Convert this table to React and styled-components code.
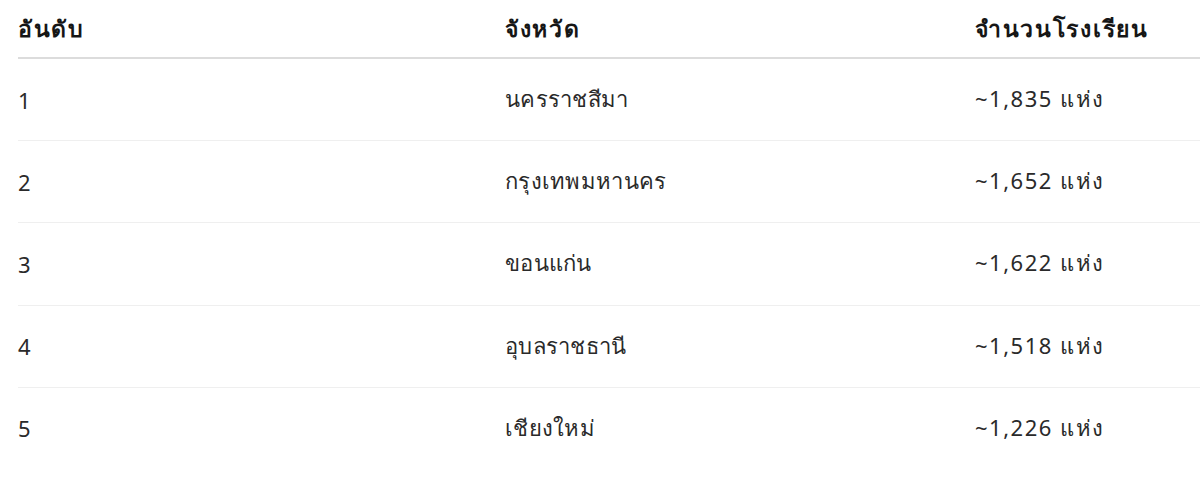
import React from "react"
import styled, { createGlobalStyle } from "styled-components"

const GlobalStyle = createGlobalStyle`
  html, body {
    margin: 0;
    padding: 0;
    background: #ffffff;
  }
  body {
    font-family: Tahoma, "Noto Sans", "DejaVu Sans", sans-serif;
    color: #222;
  }
`

const schools = [
  { rank: 1, province: "นครราชสีมา", count: "~1,835 แห่ง" },
  { rank: 2, province: "กรุงเทพมหานคร", count: "~1,652 แห่ง" },
  { rank: 3, province: "ขอนแก่น", count: "~1,622 แห่ง" },
  { rank: 4, province: "อุบลราชธานี", count: "~1,518 แห่ง" },
  { rank: 5, province: "เชียงใหม่", count: "~1,226 แห่ง" },
]

const App = () => {
  return (
    <Page>
      <GlobalStyle />
      <Table>
        <colgroup>
          <col width="487" />
          <col width="470" />
          <col width="260" />
        </colgroup>
        <thead>
          <tr>
            <HeadCell>อันดับ</HeadCell>
            <HeadCell>จังหวัด</HeadCell>
            <HeadCell>จำนวนโรงเรียน</HeadCell>
          </tr>
        </thead>
        <tbody>
          {schools.map((s, i) => (
            <Row key={s.rank} $last={i === schools.length - 1}>
              <Cell>{s.rank}</Cell>
              <Cell>{s.province}</Cell>
              <Cell $spaced>{s.count}</Cell>
            </Row>
          ))}
        </tbody>
      </Table>
    </Page>
  )
}

export default App

const Page = styled.div`
  padding-left: 18px;
  overflow: hidden;
  width: 1200px;
  box-sizing: border-box;
`
const Table = styled.table`
  border-collapse: collapse;
  table-layout: fixed;
  width: 1217px;
  font-size: 22px;
`
const HeadCell = styled.th`
  text-align: left;
  font-weight: bold;
  font-size: 23px;
  letter-spacing: 1.7px;
  color: #161616;
  height: 57px;
  padding: 0;
  vertical-align: middle;
  border-bottom: 2px solid #dcdcdc;
`
const Row = styled.tr`
  border-bottom: ${(p) => (p.$last ? "none" : "1px solid #efefef")};
`
const Cell = styled.td`
  height: 81.2px;
  padding: 0;
  vertical-align: middle;
  color: #2a2a2a;
  letter-spacing: ${(p) => (p.$spaced ? "1.5px" : "0.3px")};
`
